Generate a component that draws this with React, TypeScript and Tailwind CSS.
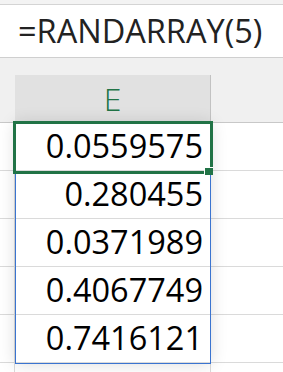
const values = ['0.0559575', '0.280455', '0.0371989', '0.4067749', '0.7416121', ''];

export default function App() {
  return (
    <div className="w-[283px] h-[372px] overflow-hidden bg-white font-['Open_Sans','Noto_Sans',sans-serif]">
      {/* ribbon edge */}
      <div className="h-[5px] bg-[#f3f3f3] border-b border-[#d4d4d4]" />

      {/* formula bar */}
      <div className="h-[53px] flex items-center pl-[18px] bg-white border-b border-[#cfcfcf] text-[32.5px] text-[#222] leading-none">
        =RANDARRAY(5)
      </div>

      {/* column headers */}
      <div className="h-[65px] bg-[#f0f0f0] border-b border-[#c8c8c8] flex items-end">
        <div className="w-[15px]" />
        <div className="w-[196px] h-[47px] bg-[#e1e1e1] border-r border-[#c2c2c2] flex items-center justify-center text-[32px] font-light text-[#217346] leading-none">
          E
        </div>
      </div>

      {/* grid */}
      <div className="relative grid grid-cols-[15px_196px_72px]">
        {values.map((v, r) => (
          <div key={r} className="contents">
            <div className="h-[48px] border-b border-r border-[#dadada]" />
            <div className="h-[48px] border-b border-r border-[#dadada] flex items-center justify-end pr-[7px] text-[32.5px] text-black leading-none">
              {v}
            </div>
            <div className="h-[48px] border-b border-[#dadada]" />
          </div>
        ))}

        {/* spill range outline */}
        <div className="absolute left-[15px] top-0 w-[196px] h-[241px] border border-[#3a74d0] shadow-[0_0_16px_rgba(0,0,0,0.14)] pointer-events-none" />

        {/* active cell with fill handle */}
        <div className="absolute left-[13px] -top-[2px] w-[200px] h-[53px] border-[3px] border-[#217346]">
          <div className="absolute -right-[3px] -bottom-[4px] w-[9px] h-[8px] bg-[#217346] border-l border-t border-white" />
        </div>
      </div>
    </div>
  );
}
